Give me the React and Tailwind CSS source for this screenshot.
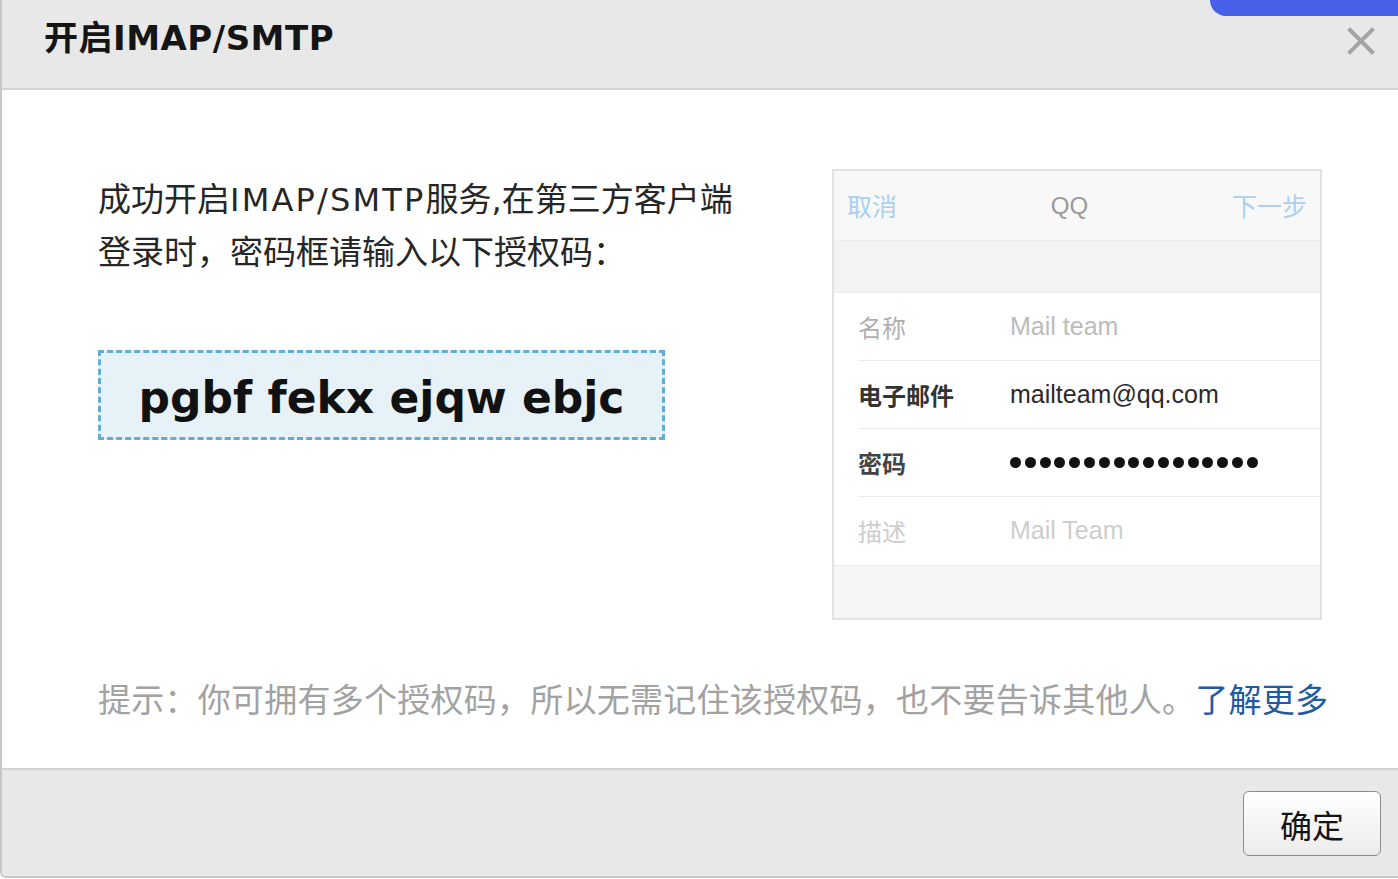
const CJK = "font-['Noto_Sans_CJK_SC','Noto_Sans',sans-serif]";

const ROWS = [
  { label: '名称', value: 'Mail team', labelCls: 'text-[#b0b0b0]', valueCls: 'text-[#bcbcbc]' },
  { label: '电子邮件', value: 'mailteam@qq.com', labelCls: 'text-[#333] font-bold', valueCls: 'text-[#2a2a2a]' },
  { label: '密码', value: null, labelCls: 'text-[#444] font-bold', valueCls: '' },
  { label: '描述', value: 'Mail Team', labelCls: 'text-[#cdcdcd]', valueCls: 'text-[#cdcdcd]' },
];

function PhoneMock() {
  return (
    <div className="w-[490px] h-[451px] border-2 border-[#e2e2e2] bg-white flex flex-col shrink-0">
      <div className="h-[70px] bg-[#f8f8f8] border-b border-[#ececec] flex items-center justify-between px-[13px] text-[25px]">
        <span className={`${CJK} text-[#a9d0f1]`}>取消</span>
        <span className="font-['Liberation_Sans',sans-serif] text-[#9a9a9a] text-[24px] ml-[10px]">QQ</span>
        <span className={`${CJK} text-[#a9d0f1]`}>下一步</span>
      </div>
      <div className="h-[52px] bg-[#f3f3f3] border-b border-[#ebebeb]" />
      {ROWS.map((r, i) => (
        <div key={r.label} className="h-[68px] pl-[24px] flex">
          <div className={`flex-1 flex items-center ${i < ROWS.length - 1 ? 'border-b border-[#ebebeb]' : ''}`}>
            <span className={`${CJK} text-[24px] w-[152px] ${r.labelCls}`}>{r.label}</span>
            {r.value ? (
              <span className={`font-['Liberation_Sans',sans-serif] text-[25px] ${r.valueCls}`}>{r.value}</span>
            ) : (
              <div className="flex gap-[3.8px]">
                {Array.from({ length: 17 }).map((_, k) => (
                  <div key={k} className="w-[11px] h-[11px] rounded-full bg-[#111]" />
                ))}
              </div>
            )}
          </div>
        </div>
      ))}
      <div className="flex-1 bg-[#f6f6f6] border-t border-[#ececec]" />
    </div>
  );
}

export default function App() {
  return (
    <div className="relative w-[1398px] h-[879px] bg-white overflow-hidden">
      <div className="flex flex-col h-[878px] border-l-2 border-b-2 border-[#c6c6c6] rounded-bl-[6px] overflow-hidden">
        <div className="relative h-[90px] shrink-0 bg-[#e8e8e8] border-b-2 border-[#d3d3d3] flex items-center pl-[42px] pb-[12px]">
          <h1 className="font-['DejaVu_Sans','Noto_Sans_CJK_SC',sans-serif] font-bold text-[34px] leading-none tracking-[0.5px] text-[#151515]">
            开启IMAP/SMTP
          </h1>
          <svg className="absolute right-[23px] top-[27px]" width="28" height="28" viewBox="0 0 28 28">
            <path d="M3 3 L25 25 M25 3 L3 25" stroke="#a4a4a4" strokeWidth="4" strokeLinecap="square" />
          </svg>
        </div>

        <div className="flex-1 bg-white pl-[96px] pt-[79px] flex flex-col">
          <div className="flex">
            <div className="flex-1 pt-[2px]">
              <div className={`${CJK} text-[33px] leading-[53px] text-[#262626] whitespace-nowrap`}>
                <div className="h-[53px]">
                  成功开启<span className="font-['DejaVu_Sans',sans-serif] text-[32px] tracking-[2.2px]">IMAP/SMTP</span>服务<span className="font-['DejaVu_Sans',sans-serif] text-[32px]">,</span>在第三方客户端
                </div>
                <div className="h-[53px]">登录时，密码框请输入以下授权码：</div>
              </div>
              <div className="mt-[73px] w-[567px] h-[90px] border-[3px] border-dashed border-[#62acd6] bg-[#e7f1f8] flex items-center justify-center">
                <span className="font-['DejaVu_Sans',sans-serif] font-bold text-[44px] leading-none text-[#111] pt-[5px]">
                  pgbf fekx ejqw ebjc
                </span>
              </div>
            </div>
            <div className="mr-[76px]">
              <PhoneMock />
            </div>
          </div>
          <p className={`${CJK} mt-[58px] text-[33px] leading-[40px] tracking-[0.25px] whitespace-nowrap text-[#a2a2a2]`}>
            提示：你可拥有多个授权码，所以无需记住该授权码，也不要告诉其他人。
            <a className="text-[#1f5aa3]">了解更多</a>
          </p>
        </div>

        <div className="h-[108px] shrink-0 bg-[#e8e8e8] border-t-2 border-[#d2d2d2] flex justify-end items-start pt-[21px] pr-[17px]">
          <button className={`${CJK} w-[138px] h-[65px] rounded-[6px] border border-[#8c8c8c] bg-gradient-to-b from-white to-[#ececec] text-[32px] text-[#141414]`}>
            确定
          </button>
        </div>
      </div>
      <div className="absolute top-0 right-0 w-[188px] h-[16px] bg-[#4760e8] rounded-bl-[18px]" />
    </div>
  );
}
